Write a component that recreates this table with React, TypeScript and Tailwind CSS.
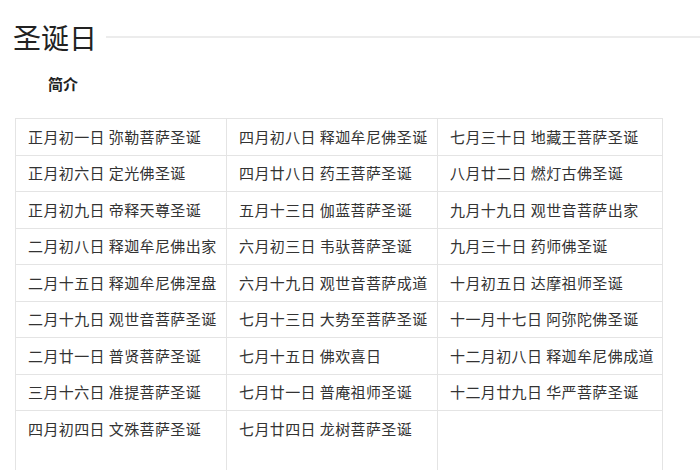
const rows: string[][] = [
  ["正月初一日 弥勒菩萨圣诞", "四月初八日 释迦牟尼佛圣诞", "七月三十日 地藏王菩萨圣诞"],
  ["正月初六日 定光佛圣诞", "四月廿八日 药王菩萨圣诞", "八月廿二日 燃灯古佛圣诞"],
  ["正月初九日 帝释天尊圣诞", "五月十三日 伽蓝菩萨圣诞", "九月十九日 观世音菩萨出家"],
  ["二月初八日 释迦牟尼佛出家", "六月初三日 韦驮菩萨圣诞", "九月三十日 药师佛圣诞"],
  ["二月十五日 释迦牟尼佛涅盘", "六月十九日 观世音菩萨成道", "十月初五日 达摩祖师圣诞"],
  ["二月十九日 观世音菩萨圣诞", "七月十三日 大势至菩萨圣诞", "十一月十七日 阿弥陀佛圣诞"],
  ["二月廿一日 普贤菩萨圣诞", "七月十五日 佛欢喜日", "十二月初八日 释迦牟尼佛成道"],
  ["三月十六日 准提菩萨圣诞", "七月廿一日 普庵祖师圣诞", "十二月廿九日 华严菩萨圣诞"],
  ["四月初四日 文殊菩萨圣诞", "七月廿四日 龙树菩萨圣诞", ""],
];

export default function App() {
  return (
    <div className="w-[700px] h-[470px] overflow-hidden bg-white text-[#333] font-['Noto_Sans_CJK_SC',sans-serif]">
      {/* Title */}
      <div className="flex items-center pt-[19px] pl-[13px]">
        <h1 className="text-[28px] leading-[36px] text-[#222] font-normal">圣诞日</h1>
        <div className="flex-1 ml-[9px] h-[2px] bg-[#ececec]" />
      </div>

      {/* Subtitle */}
      <h2 className="mt-[19px] ml-[48px] text-[15px] leading-[20px] font-bold text-[#222]">简介</h2>

      {/* Table */}
      <table className="mt-[24px] ml-[15px] border-collapse text-[15px] tracking-[0.4px]">
        <tbody>
          {rows.map((row, i) => (
            <tr key={i} className={i === rows.length - 1 ? "h-[80px] align-top" : "h-[36.5px]"}>
              {row.map((cell, j) => (
                <td
                  key={j}
                  className={
                    "border border-[#e4e4e4] pl-[12px] whitespace-nowrap " +
                    (j === 2 ? "w-[225px]" : "w-[211px]") +
                    (i === rows.length - 1 ? " pt-[7px]" : "")
                  }
                >
                  {cell}
                </td>
              ))}
            </tr>
          ))}
        </tbody>
      </table>
    </div>
  );
}
